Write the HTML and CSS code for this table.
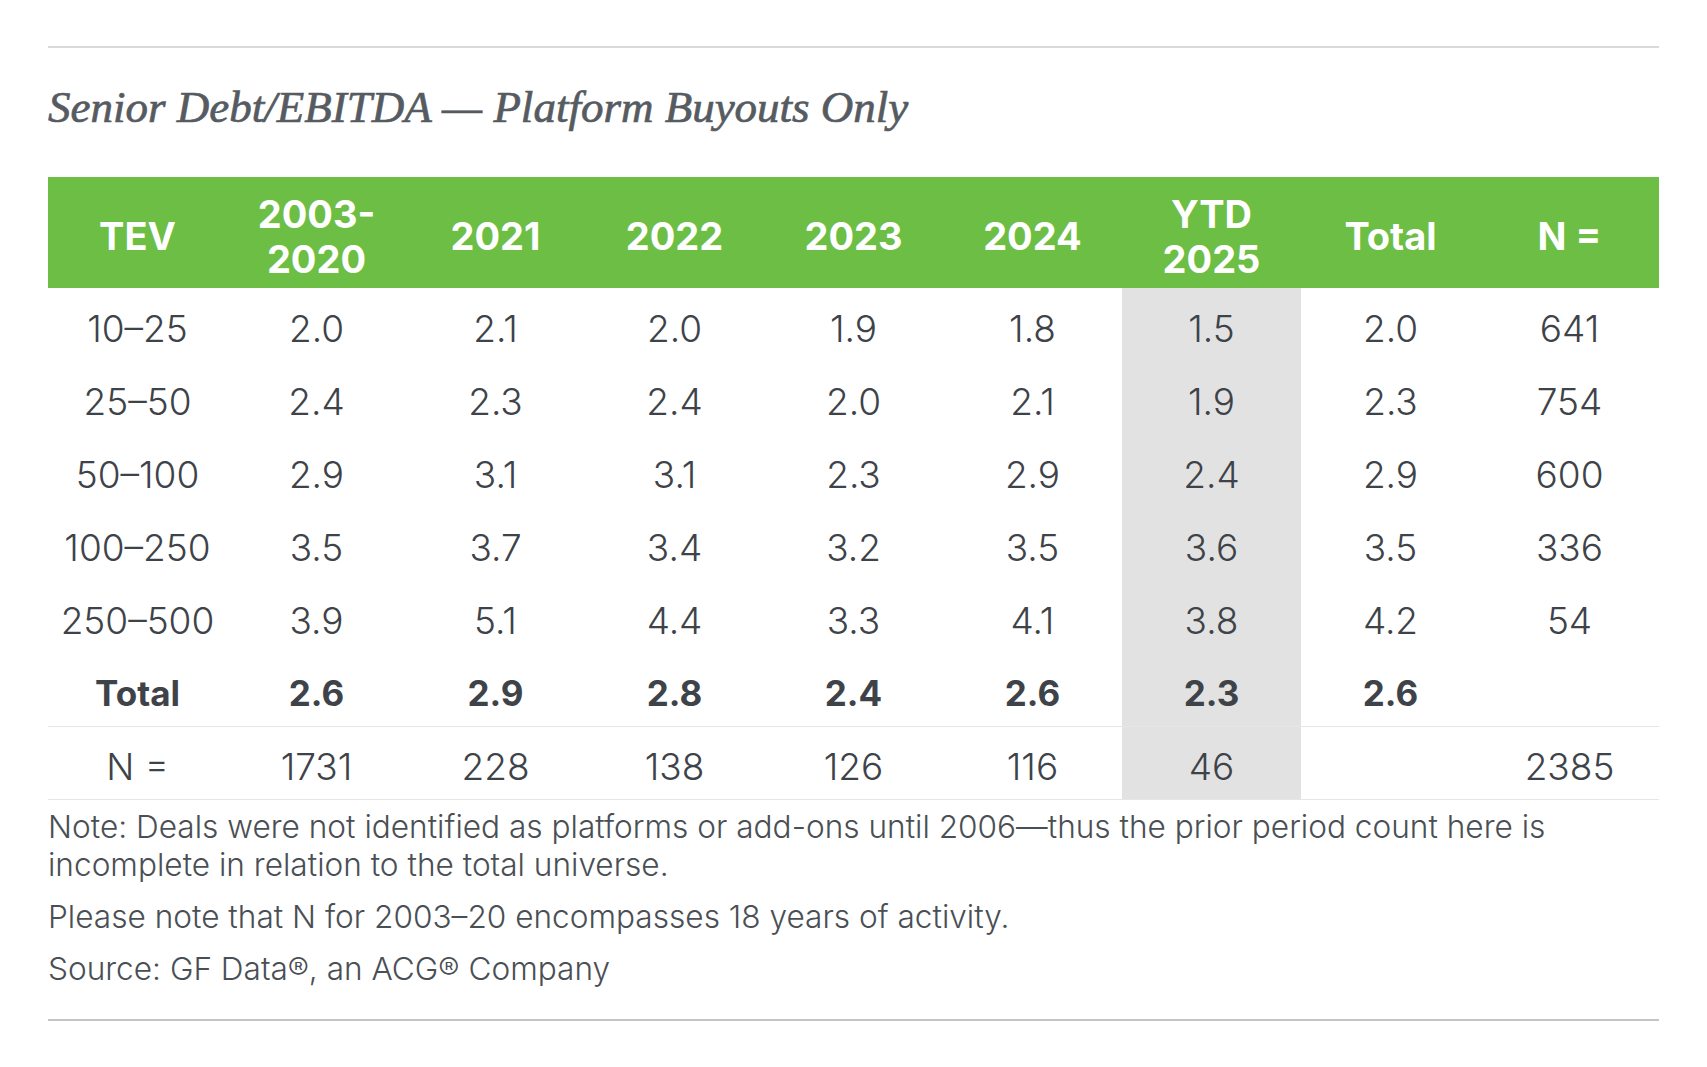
FILE: index.html
```html
<!DOCTYPE html>
<html>
<head>
<meta charset="utf-8">
<link rel="stylesheet" href="styles.css">
</head>
<body>
<div class="wrap">
  <hr class="rule">
  <h1 class="title">Senior Debt/EBITDA — Platform Buyouts Only</h1>
  <table class="data">
    <thead>
      <tr>
        <th>TEV</th><th>2003-<br>2020</th><th>2021</th><th>2022</th><th>2023</th><th>2024</th><th>YTD<br>2025</th><th>Total</th><th>N =</th>
      </tr>
    </thead>
    <tbody>
      <tr><td>10–25</td><td>2.0</td><td>2.1</td><td>2.0</td><td>1.9</td><td>1.8</td><td class="ytd">1.5</td><td>2.0</td><td>641</td></tr>
      <tr><td>25–50</td><td>2.4</td><td>2.3</td><td>2.4</td><td>2.0</td><td>2.1</td><td class="ytd">1.9</td><td>2.3</td><td>754</td></tr>
      <tr><td>50–100</td><td>2.9</td><td>3.1</td><td>3.1</td><td>2.3</td><td>2.9</td><td class="ytd">2.4</td><td>2.9</td><td>600</td></tr>
      <tr><td>100–250</td><td>3.5</td><td>3.7</td><td>3.4</td><td>3.2</td><td>3.5</td><td class="ytd">3.6</td><td>3.5</td><td>336</td></tr>
      <tr><td>250–500</td><td>3.9</td><td>5.1</td><td>4.4</td><td>3.3</td><td>4.1</td><td class="ytd">3.8</td><td>4.2</td><td>54</td></tr>
      <tr class="total"><td>Total</td><td>2.6</td><td>2.9</td><td>2.8</td><td>2.4</td><td>2.6</td><td class="ytd">2.3</td><td>2.6</td><td></td></tr>
      <tr class="count"><td>N =</td><td>1731</td><td>228</td><td>138</td><td>126</td><td>116</td><td class="ytd">46</td><td></td><td>2385</td></tr>
    </tbody>
  </table>
  <div class="notes">
    <p>Note: Deals were not identified as platforms or add-ons until 2006—thus the prior period count here is incomplete in relation to the total universe.</p>
    <p>Please note that N for 2003–20 encompasses 18 years of activity.</p>
    <p>Source: GF Data®, an ACG® Company</p>
  </div>
  <hr class="rule bottom">
</div>
</body>
</html>
```

FILE: styles.css
```css
html, body {
  margin: 0;
  padding: 0;
  background: #ffffff;
}
.wrap {
  width: 1611px;
  margin-left: 48px;
  padding-top: 46px;
}
.rule {
  border: 0;
  height: 2px;
  background: #d9d9d9;
  margin: 0;
}
.rule.bottom {
  margin-top: 31px;
  background: #c4c4c4;
}
.title {
  margin: 0;
  padding-top: 34px;
  height: 129px;
  box-sizing: border-box;
  font-family: "Liberation Serif", serif;
  font-style: italic;
  font-weight: 400;
  font-size: 45px;
  line-height: 50px;
  color: #565b61;
  -webkit-text-stroke: 0.7px #565b61;
}
.data {
  width: 1611px;
  border-collapse: collapse;
  table-layout: fixed;
  font-family: Inter, "Liberation Sans", sans-serif;
  color: #3e4349;
}
.data th {
  background: #6dbe45;
  color: #ffffff;
  font-weight: 700;
  font-size: 38px;
  line-height: 45px;
  height: 111px;
  padding: 8px 0 0 0;
  box-sizing: border-box;
  text-align: center;
  vertical-align: middle;
}
.data td {
  height: 73px;
  padding: 7px 0 0 0;
  box-sizing: border-box;
  text-align: center;
  vertical-align: middle;
  font-size: 37px;
  font-weight: 300;
}
.data td.ytd {
  background: #e2e2e2;
}
.data tr.total td {
  font-weight: 700;
  font-size: 35px;
}
.data tr.count td {
  border-top: 1px solid #e6e6e6;
  border-bottom: 1px solid #e6e6e6;
}
.notes {
  padding-top: 8px;
  font-family: Inter, "Liberation Sans", sans-serif;
  font-size: 31.6px;
  font-weight: 300;
  line-height: 38px;
  color: #4a4f55;
}
.notes p {
  margin: 0 0 14px 0;
}
.notes p:last-child {
  margin-bottom: 0;
}
```
